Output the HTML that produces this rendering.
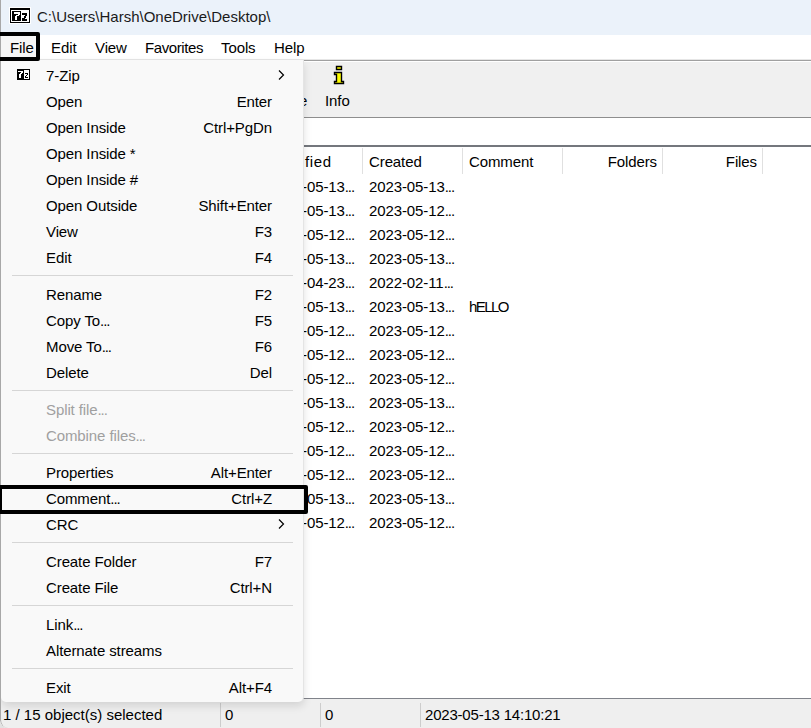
<!DOCTYPE html>
<html><head><meta charset="utf-8">
<style>
*{margin:0;padding:0;box-sizing:border-box}
html,body{width:811px;height:728px;overflow:hidden;background:#e2e2e2}
#win{position:absolute;left:0;top:0;width:811px;height:728px;overflow:hidden;border-bottom-left-radius:8px;background:#fff}
body{position:relative;font-family:"Liberation Sans",sans-serif;font-size:15px;color:#000}
.a{position:absolute;white-space:nowrap}
#title{left:0;top:0;width:811px;height:35px;background:#ebf2fa}
#menubar{left:0;top:35px;width:811px;height:25px;background:#fff;border-bottom:1px solid #e6e6e6}
#toolbar{left:0;top:60px;width:811px;height:58px;background:#f0f0f0;border-top:1px solid #a0a0a0;border-bottom:1px solid #8e8e8e;box-shadow:inset 0 1px 0 #fff}
#addr{left:0;top:118px;width:811px;height:27px;background:#fff}
#list{left:0;top:145px;width:811px;height:553px;background:#fff;border-top:2px solid #74777d}
#status{left:0;top:698px;width:811px;height:30px;background:#efefef;border-top:1px solid #80838a}
#status:before{content:"";position:absolute;left:0;top:-1px;width:12px;height:1px;background:#efefef}
.sep{position:absolute;width:1px;background:#e0e0e0}
#menu{left:1px;top:60px;width:302px;height:642px;background:#f9f9f9;border-radius:0 0 5px 5px;box-shadow:1px 0 0 #e4e4e4,1px 4px 8px rgba(0,0,0,0.12)}
.mi{position:absolute;left:45px;height:26px;line-height:26px}
.sc{position:absolute;right:31px;height:26px;line-height:26px}
.ms{position:absolute;left:11px;width:281px;height:1px;background:#d6d6d6}
.dis{color:#a0a0a0}
.t{letter-spacing:-0.1px}
.el{letter-spacing:-1.1px}
</style></head><body>
<div id="win">
<div class="a" id="title"></div>
<div class="a" id="menubar"></div>
<div class="a" id="toolbar"></div>
<div class="a" id="addr"></div>
<div class="a" id="list"></div>
<div class="a" id="status"></div>

<!-- title -->
<svg class="a" style="left:9px;top:7px" width="22" height="17" viewBox="-1 -1 22 17">
<rect x="-1" y="-1" width="22" height="17" fill="#fff"/>
<rect x="0" y="0" width="20" height="15" fill="#000"/>
<rect x="1" y="2" width="18" height="12" fill="#fff"/>
<rect x="2" y="3" width="9" height="10" fill="#000"/>
<path d="M4 4H10V7H9V8H7V12H5V8H6V7H8V6H4Z" fill="#fff"/>
<path d="M12 5H17V8H16V10H15V11H17V13H12V10H14V8H15V7H12Z" fill="#000"/>
</svg>
<div class="a" style="left:37px;top:7px;font-size:15px;letter-spacing:0px;line-height:20px;color:#1a1a1a">C:\Users\Harsh\OneDrive\Desktop\</div>

<!-- menubar -->
<div class="a" style="left:0px;top:35px;width:37px;height:23px;background:#f6f6f6"></div>
<div class="a t" style="left:10px;top:38px;line-height:20px">File</div>
<div class="a t" style="left:51px;top:38px;line-height:20px">Edit</div>
<div class="a t" style="left:95px;top:38px;line-height:20px">View</div>
<div class="a" style="left:145px;top:38px;line-height:20px;letter-spacing:-0.4px">Favorites</div>
<div class="a t" style="left:221px;top:38px;line-height:20px">Tools</div>
<div class="a t" style="left:274px;top:38px;line-height:20px">Help</div>

<!-- toolbar -->
<div class="a t" style="left:299px;top:91px;line-height:20px">e</div>
<svg class="a" style="left:333px;top:65px" width="13" height="21" viewBox="0 0 13 21">
<path d="M3.5 1.5H8.5V4.5H3.5Z" fill="#ff0" stroke="#000" stroke-width="1.4"/>
<path d="M1.5 7.5H8.5V16.5H10.5V18.5H1.5V16.5H3.5V9.5H1.5Z" fill="#ff0" stroke="#000" stroke-width="1.4"/>
</svg>
<div class="a t" style="left:325px;top:91px;line-height:20px">Info</div>

<!-- list header -->
<div class="a" style="left:305px;top:152px;line-height:20px;letter-spacing:0.6px">fied</div>
<div class="a t" style="left:369px;top:152px;line-height:20px">Created</div>
<div class="a t" style="left:469px;top:152px;line-height:20px">Comment</div>
<div class="a t" style="left:600px;width:57px;text-align:right;top:152px;line-height:20px">Folders</div>
<div class="a t" style="left:700px;width:57px;text-align:right;top:152px;line-height:20px">Files</div>
<div class="sep" style="left:362px;top:148px;height:26px"></div>
<div class="sep" style="left:462px;top:148px;height:26px"></div>
<div class="sep" style="left:562px;top:148px;height:26px"></div>
<div class="sep" style="left:662px;top:148px;height:26px"></div>
<div class="sep" style="left:762px;top:148px;height:26px"></div>

<div class="a t" style="left:302px;top:177px;line-height:20px">-05-13<span class="el">..</span>.</div>
<div class="a t" style="left:369px;top:177px;line-height:20px">2023-05-13<span class="el">..</span>.</div>
<div class="a t" style="left:302px;top:201px;line-height:20px">-05-13<span class="el">..</span>.</div>
<div class="a t" style="left:369px;top:201px;line-height:20px">2023-05-12<span class="el">..</span>.</div>
<div class="a t" style="left:302px;top:225px;line-height:20px">-05-12<span class="el">..</span>.</div>
<div class="a t" style="left:369px;top:225px;line-height:20px">2023-05-12<span class="el">..</span>.</div>
<div class="a t" style="left:302px;top:249px;line-height:20px">-05-13<span class="el">..</span>.</div>
<div class="a t" style="left:369px;top:249px;line-height:20px">2023-05-13<span class="el">..</span>.</div>
<div class="a t" style="left:302px;top:273px;line-height:20px">-04-23<span class="el">..</span>.</div>
<div class="a t" style="left:369px;top:273px;line-height:20px">2022-02-11<span class="el">..</span>.</div>
<div class="a t" style="left:302px;top:297px;line-height:20px">-05-13<span class="el">..</span>.</div>
<div class="a t" style="left:369px;top:297px;line-height:20px">2023-05-13<span class="el">..</span>.</div>
<div class="a t" style="left:302px;top:321px;line-height:20px">-05-12<span class="el">..</span>.</div>
<div class="a t" style="left:369px;top:321px;line-height:20px">2023-05-12<span class="el">..</span>.</div>
<div class="a t" style="left:302px;top:345px;line-height:20px">-05-12<span class="el">..</span>.</div>
<div class="a t" style="left:369px;top:345px;line-height:20px">2023-05-12<span class="el">..</span>.</div>
<div class="a t" style="left:302px;top:369px;line-height:20px">-05-12<span class="el">..</span>.</div>
<div class="a t" style="left:369px;top:369px;line-height:20px">2023-05-12<span class="el">..</span>.</div>
<div class="a t" style="left:302px;top:393px;line-height:20px">-05-13<span class="el">..</span>.</div>
<div class="a t" style="left:369px;top:393px;line-height:20px">2023-05-13<span class="el">..</span>.</div>
<div class="a t" style="left:302px;top:417px;line-height:20px">-05-12<span class="el">..</span>.</div>
<div class="a t" style="left:369px;top:417px;line-height:20px">2023-05-12<span class="el">..</span>.</div>
<div class="a t" style="left:302px;top:441px;line-height:20px">-05-12<span class="el">..</span>.</div>
<div class="a t" style="left:369px;top:441px;line-height:20px">2023-05-12<span class="el">..</span>.</div>
<div class="a t" style="left:302px;top:465px;line-height:20px">-05-12<span class="el">..</span>.</div>
<div class="a t" style="left:369px;top:465px;line-height:20px">2023-05-12<span class="el">..</span>.</div>
<div class="a t" style="left:302px;top:489px;line-height:20px">-05-13<span class="el">..</span>.</div>
<div class="a t" style="left:369px;top:489px;line-height:20px">2023-05-13<span class="el">..</span>.</div>
<div class="a t" style="left:302px;top:513px;line-height:20px">-05-12<span class="el">..</span>.</div>
<div class="a t" style="left:369px;top:513px;line-height:20px">2023-05-12<span class="el">..</span>.</div>
<div class="a" style="left:469px;top:297px;line-height:20px;letter-spacing:-1.6px">hELLO</div>

<!-- status -->
<div class="a" style="left:3px;top:705px;line-height:20px;letter-spacing:0px">1 / 15 object(s) selected</div>
<div class="sep" style="left:220px;top:703px;height:24px;background:#cdcdcd"></div>
<div class="a t" style="left:225px;top:705px;line-height:20px">0</div>
<div class="sep" style="left:320px;top:703px;height:24px;background:#cdcdcd"></div>
<div class="a t" style="left:325px;top:705px;line-height:20px">0</div>
<div class="sep" style="left:420px;top:703px;height:24px;background:#cdcdcd"></div>
<div class="a" style="left:425px;top:705px;line-height:20px;letter-spacing:-0.2px">2023-05-13 14:10:21</div>

<!-- menu -->
<div class="a" id="menu">
<svg class="a" style="left:16px;top:9px" width="13" height="11" viewBox="0 0 13 11">
<rect width="13" height="11" fill="#000"/>
<rect x="7" y="1" width="5" height="9" fill="#fff"/>
<path d="M1 2H6V4H5V5H4V9H2V5H3V4H4V3H1Z" fill="#fff"/>
<path d="M8 4H11V6H10V7H9V8H11V9H8V7H9V6H10V5H8Z" fill="#000"/>
</svg>
<div class="mi t" style="top:3px">7-Zip</div>
<svg class="a" style="left:277px;top:10px" width="7" height="11" viewBox="0 0 7 11"><path d="M1 0.5 L5.5 5 L1 9.5" fill="none" stroke="#000" stroke-width="1.2"/></svg>
<div class="mi t" style="top:29px">Open</div>
<div class="sc t" style="top:29px">Enter</div>
<div class="mi t" style="top:55px">Open Inside</div>
<div class="sc t" style="top:55px">Ctrl+PgDn</div>
<div class="mi t" style="top:81px">Open Inside *</div>
<div class="mi t" style="top:107px">Open Inside #</div>
<div class="mi t" style="top:133px">Open Outside</div>
<div class="sc t" style="top:133px">Shift+Enter</div>
<div class="mi t" style="top:159px">View</div>
<div class="sc t" style="top:159px">F3</div>
<div class="mi t" style="top:185px">Edit</div>
<div class="sc t" style="top:185px">F4</div>
<div class="ms" style="top:215px"></div>
<div class="mi t" style="top:222px">Rename</div>
<div class="sc t" style="top:222px">F2</div>
<div class="mi t" style="top:248px">Copy To<span class="el">..</span>.</div>
<div class="sc t" style="top:248px">F5</div>
<div class="mi t" style="top:274px">Move To<span class="el">..</span>.</div>
<div class="sc t" style="top:274px">F6</div>
<div class="mi t" style="top:300px">Delete</div>
<div class="sc t" style="top:300px">Del</div>
<div class="ms" style="top:330px"></div>
<div class="mi t dis" style="top:337px">Split file<span class="el">..</span>.</div>
<div class="mi t dis" style="top:363px">Combine files<span class="el">..</span>.</div>
<div class="ms" style="top:393px"></div>
<div class="mi t" style="top:400px">Properties</div>
<div class="sc t" style="top:400px">Alt+Enter</div>
<div class="mi t" style="top:426px">Comment<span class="el">..</span>.</div>
<div class="sc t" style="top:426px">Ctrl+Z</div>
<div class="mi t" style="top:452px">CRC</div>
<svg class="a" style="left:277px;top:459px" width="7" height="11" viewBox="0 0 7 11"><path d="M1 0.5 L5.5 5 L1 9.5" fill="none" stroke="#000" stroke-width="1.2"/></svg>
<div class="ms" style="top:482px"></div>
<div class="mi t" style="top:489px">Create Folder</div>
<div class="sc t" style="top:489px">F7</div>
<div class="mi t" style="top:515px">Create File</div>
<div class="sc t" style="top:515px">Ctrl+N</div>
<div class="ms" style="top:545px"></div>
<div class="mi t" style="top:552px">Link<span class="el">..</span>.</div>
<div class="mi t" style="top:578px">Alternate streams</div>
<div class="ms" style="top:608px"></div>
<div class="mi t" style="top:615px">Exit</div>
<div class="sc t" style="top:615px">Alt+F4</div>
</div>

<!-- window left border -->
<div class="a" style="left:0;top:-10px;width:20px;height:738px;border-left:1px solid #a8a8a8;border-bottom-left-radius:8px"></div>

<!-- highlight boxes -->
<div class="a" style="left:-4px;top:32px;width:44px;height:29px;border:4px solid #000;border-radius:2px"></div>
<div class="a" style="left:-2px;top:485px;width:310px;height:29px;border:4px solid #000;border-radius:2px"></div>
</div>
</body></html>
